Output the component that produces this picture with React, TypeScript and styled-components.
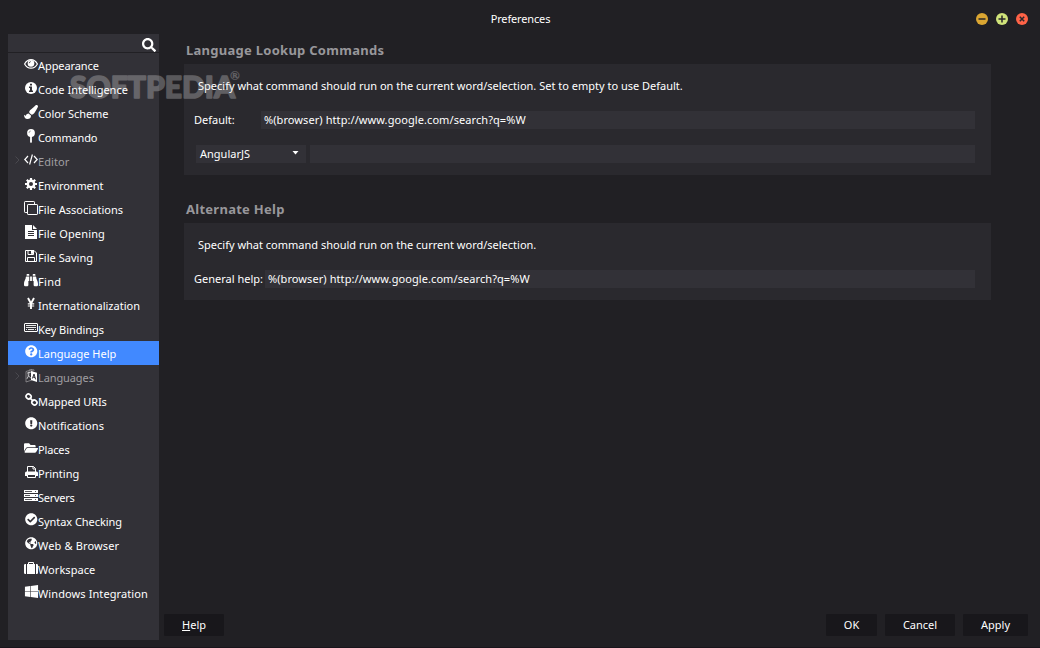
import React from "react";
import styled, { createGlobalStyle } from "styled-components";
import {
    FaBinoculars,
    FaCheckCircle,
    FaExclamationCircle,
    FaFolderOpen,
    FaGlobeAmericas,
    FaPaintBrush,
    FaQuestionCircle,
    FaSearch,
    FaWindows,
} from "react-icons/fa";

const GlobalStyle = createGlobalStyle`
    * {
        box-sizing: border-box;
    }

    body {
        margin: 0;
        background: #212024;
        overflow: hidden;
    }
`;

const Window = styled.div`
    position: relative;
    display: flex;
    flex-direction: column;
    width: 1040px;
    height: 648px;
    background: #212024;
    border-bottom: 1px solid #19151c;
    color: #fff;
    font-family: "Noto Sans", "Open Sans", sans-serif;
    font-size: 11px;
    line-height: 16px;
    white-space: nowrap;
`;

const TitleBar = styled.header`
    display: grid;
    grid-template-columns: 1fr auto 1fr;
    align-items: center;
    height: 34px;
    padding: 4px 12px 0 12px;
`;

const Title = styled.div`
    grid-column: 2;
    padding-left: 1px;
    letter-spacing: -0.15px;
`;

const Controls = styled.div`
    display: flex;
    justify-content: flex-end;
    gap: 8px;
`;

const Control = styled.svg`
    display: block;
    width: 12px;
    height: 12px;
`;

const Body = styled.div`
    display: flex;
    height: 606px;
    padding-left: 8px;
`;

const Sidebar = styled.nav`
    width: 151px;
    background: #323137;
`;

const SearchBar = styled.div`
    display: flex;
    justify-content: flex-end;
    height: 19px;
    padding: 4px 3px 0 0;
    border-bottom: 1px solid #212024;
    font-size: 14px;
`;

const NavItem = styled.div<{ $active?: boolean; $dim?: boolean }>`
    display: flex;
    align-items: center;
    height: 24px;
    background: ${({ $active }) => ($active ? "#4189ff" : "transparent")};
    color: ${({ $dim }) => ($dim ? "#a09fa2" : "#fff")};
`;

const Twisty = styled.span`
    display: flex;
    justify-content: flex-end;
    width: 16px;
    padding: 0 4px 2px 0;
`;

const NavIcon = styled.span`
    display: flex;
    align-items: center;
    justify-content: center;
    flex: none;
    width: 14px;
    height: 14px;
    margin-bottom: 3px;
    color: #fff;
    font-size: 12.5px;

    svg {
        flex: none;
        overflow: visible;
    }
`;

const Label = styled.span<{ $spacing?: number }>`
    padding-top: 2px;
    letter-spacing: ${({ $spacing = 0 }) => $spacing}px;
`;

const Main = styled.main`
    display: flex;
    flex-direction: column;
    width: 869px;
    padding-left: 5px;
`;

const Section = styled.section`
    width: 807px;
    margin: 0 0 18px 20px;
`;

const Heading = styled.h2`
    height: 30px;
    margin: 0;
    padding: 7px 0 0 2px;
    color: #98979b;
    font-size: 13px;
    font-weight: 700;
    line-height: 18px;
    letter-spacing: 0.27px;
`;

const Panel = styled.div<{ $height: number }>`
    height: ${({ $height }) => $height}px;
    padding: 14px 16px 0 10px;
    background: #2a292e;
`;

const Description = styled.p`
    margin: 0;
    padding-left: 4px;
`;

const Field = styled.div<{ $top: number; $label?: number }>`
    display: grid;
    grid-template-columns: ${({ $label = 0 }) => $label}px 1fr;
    align-items: center;
    height: 18px;
    margin-top: ${({ $top }) => $top}px;
`;

const Input = styled.div`
    height: 18px;
    padding: 1px 3px 0;
    background: #323137;
    letter-spacing: 0.08px;
`;

const Select = styled.div`
    display: flex;
    align-items: center;
    justify-content: space-between;
    width: 110px;
    height: 18px;
    margin-left: 2px;
    padding: 0 7px 0 4px;
    background: #323137;
`;

const Caret = styled.svg`
    width: 7px;
    height: 4px;
    margin-bottom: 3px;
`;

const Footer = styled.footer`
    display: flex;
    gap: 8px;
    margin-top: auto;
    padding-bottom: 4px;
`;

const Button = styled.div<{ $width: number }>`
    width: ${({ $width }) => $width}px;
    height: 22px;
    padding-top: 3px;
    border-radius: 1px;
    background: #18171b;
    text-align: center;

    &:first-child {
        margin-right: auto;
    }
`;

const Watermark = styled.svg`
    position: absolute;
    top: 66px;
    left: 64px;
    width: 184px;
    height: 40px;
    overflow: visible;
    pointer-events: none;
`;

const EyeIcon = () => (
    <svg width="14" height="10" viewBox="0 0 14 10" fill="none" stroke="currentColor">
        <path d="M.6 5C3.8-.8 10.2-.8 13.4 5C10.2 10.6 3.8 10.6.6 5Z" strokeWidth="1.2" />
        <circle cx="7" cy="4.4" r="3.3" fill="currentColor" stroke="none" />
        <path d="M5.2 4.2Q5.3 2.7 6.8 2.6" stroke="#323137" strokeWidth=".8" />
    </svg>
);

const InfoIcon = () => (
    <svg width="12" height="12" viewBox="0 0 12 12">
        <circle cx="6" cy="6" r="6" fill="currentColor" />
        <path d="M5 1.8H7V3.6H5zM4 4.6H7V8.4H8V10H4V8.4H5V6H4z" fill="#323137" />
    </svg>
);

const GearIcon = () => (
    <svg width="12" height="12" viewBox="0 0 12 12" fill="none" stroke="currentColor">
        <circle cx="6" cy="6" r="3.2" strokeWidth="2.4" />
        <path
            d="M6 0V2.5M6 9.5V12M0 6H2.5M9.5 6H12M1.8 1.8L3.5 3.5M8.5 8.5L10.2 10.2M1.8 10.2L3.5 8.5M8.5 3.5L10.2 1.8"
            strokeWidth="2.2"
        />
    </svg>
);

const YenIcon = () => (
    <svg width="8" height="11" viewBox="0 0 8 11" fill="none" stroke="currentColor">
        <path d="M1 0L4 5.5L7 0M4 5V11" strokeWidth="1.9" />
        <path d="M.8 5.9H7.2M.8 8H7.2" strokeWidth="1.1" />
    </svg>
);

const PinIcon = () => (
    <svg width="8" height="14" viewBox="0 0 8 14" fill="currentColor">
        <circle cx="4" cy="4" r="3.9" />
        <path d="M3.1 7h1.8v6.2L4 14l-.9-.8z" />
        <path d="M2 3.9Q2.1 2.2 3.8 2" fill="none" stroke="#777" strokeWidth=".7" />
    </svg>
);

const CodeIcon = () => (
    <svg width="14" height="11" viewBox="0 0 14 11" fill="none" stroke="currentColor" strokeWidth="1.2">
        <path d="M4 2L.8 5.5L4 9M10 2L13.2 5.5L10 9M8.4.5L5.6 10.5" />
    </svg>
);

const CopyIcon = () => (
    <svg width="14" height="14" viewBox="0 0 14 14" fill="none" stroke="currentColor">
        <path d="M3.5 11.5H1.2Q.5 11.5.5 10.8V1.2Q.5.5 1.2.5H9.8Q10.5.5 10.5 1.2V3" />
        <rect x="3.5" y="3.5" width="10" height="10" rx=".6" />
    </svg>
);

const FileIcon = () => (
    <svg width="12" height="14" viewBox="0 0 12 14">
        <path d="M0 0H7V5H12V14H0zM8 0L12 4H8z" fill="currentColor" />
        <path d="M3 6.5H9M3 8.5H9M3 10.5H9" stroke="#323137" />
    </svg>
);

const FloppyIcon = () => (
    <svg width="12" height="12" viewBox="0 0 12 12" fill="none" stroke="currentColor">
        <path d="M.5.5H9L11.5 3V11.5H.5zM3 .5V4.5H8.5V.5M2.5 11.5V7.5H9.5V11.5" />
        <path d="M6.5 1H7.5V3.5H6.5z" fill="currentColor" />
    </svg>
);

const KeyboardIcon = () => (
    <svg width="14" height="9" viewBox="0 0 14 9" fill="none" stroke="currentColor">
        <rect x=".5" y=".5" width="13" height="8" rx=".5" />
        <path d="M2 2.5H12M2 4.5H12M2 6.5H3M4 6.5H10M11 6.5H12" strokeWidth=".9" />
    </svg>
);

const LanguageIcon = () => (
    <svg width="12" height="14" viewBox="0 0 12 14" fill="none">
        <path d="M1 2.5L7 .5V11L1 13z" stroke="#a09fa2" strokeWidth=".7" />
        <path d="M2 4.2L6 3M4 2.5Q4.3 7 2 9.8M2.5 6L5.8 9" stroke="#d8d8da" strokeWidth=".9" />
        <path d="M6 2L12 3.8V13L6 11z" fill="currentColor" />
        <path d="M7.4 9.5L9 5L10.6 10.4M8 8L10 8.6" stroke="#323137" />
        <path d="M4 1L9 .8V2" stroke="#a09fa2" strokeWidth=".7" />
    </svg>
);

const LinkIcon = () => (
    <svg width="13" height="13" viewBox="0 0 13 13" fill="none" stroke="currentColor" strokeWidth="1.6">
        <rect x="1" y="1.2" width="5.2" height="4.6" rx="2.2" transform="rotate(45 3.6 3.5)" />
        <rect x="6.8" y="7.2" width="5.2" height="4.6" rx="2.2" transform="rotate(45 9.4 9.5)" />
        <path d="M4.6 4.7L8.4 8.3" />
    </svg>
);

const PrinterIcon = () => (
    <svg width="13" height="12" viewBox="0 0 13 12">
        <path d="M2.5 6V.5H8.5L10.5 2.5V6M8 .5V3H10.5" fill="none" stroke="currentColor" />
        <path d="M1.5 5.5H11.5Q13 5.5 13 7V10H0V7Q0 5.5 1.5 5.5z" fill="currentColor" />
        <path d="M2.5 8.5H10.5V11.5H2.5z" fill="#323137" stroke="currentColor" />
    </svg>
);

const ServerIcon = () => (
    <svg width="14" height="11" viewBox="0 0 14 11">
        <path d="M0 0H14V3H0zM0 4H14V7H0zM0 8H14V11H0z" fill="currentColor" />
        <path d="M1 1.5H8M1 5.5H6M1 9.5H8M11 1.5H12M11 5.5H12M11 9.5H12" stroke="#323137" strokeWidth=".8" />
    </svg>
);

const SuitcaseIcon = () => (
    <svg width="14" height="12" viewBox="0 0 14 12" fill="currentColor">
        <path d="M0 3.3Q0 2 1.3 2H2V12H1.3Q0 12 0 10.7zM14 3.3Q14 2 12.7 2H12V12H12.7Q14 12 14 10.7zM3 2H11V12H3z" />
        <path d="M4.5 2.5V.5H9.5V2.5" fill="none" stroke="currentColor" />
    </svg>
);

interface NavEntry {
    label: string;
    icon: React.ReactNode;
    spacing?: number;
    active?: boolean;
    parent?: boolean;
}

const entries: NavEntry[] = [
    { label: "Appearance", icon: <EyeIcon />, spacing: -0.08 },
    { label: "Code Intelligence", icon: <InfoIcon /> },
    { label: "Color Scheme", icon: <FaPaintBrush size={14} />, spacing: -0.08 },
    { label: "Commando", icon: <PinIcon />, spacing: -0.15 },
    { label: "Editor", icon: <CodeIcon />, parent: true, spacing: 0.1 },
    { label: "Environment", icon: <GearIcon />, spacing: -0.1 },
    { label: "File Associations", icon: <CopyIcon />, spacing: 0.04 },
    { label: "File Opening", icon: <FileIcon />, spacing: 0.15 },
    { label: "File Saving", icon: <FloppyIcon />, spacing: 0.04 },
    { label: "Find", icon: <FaBinoculars size={14} />, spacing: 0.3 },
    { label: "Internationalization", icon: <YenIcon /> },
    { label: "Key Bindings", icon: <KeyboardIcon />, spacing: -0.04 },
    { label: "Language Help", icon: <FaQuestionCircle />, active: true },
    { label: "Languages", icon: <LanguageIcon />, parent: true, spacing: -0.1 },
    { label: "Mapped URIs", icon: <LinkIcon />, spacing: -0.05 },
    { label: "Notifications", icon: <FaExclamationCircle />, spacing: 0.04 },
    { label: "Places", icon: <FaFolderOpen size={14} />, spacing: -0.15 },
    { label: "Printing", icon: <PrinterIcon /> },
    { label: "Servers", icon: <ServerIcon />, spacing: -0.25 },
    { label: "Syntax Checking", icon: <FaCheckCircle />, spacing: -0.05 },
    { label: "Web & Browser", icon: <FaGlobeAmericas />, spacing: 0.15 },
    { label: "Workspace", icon: <SuitcaseIcon />, spacing: 0.06 },
    { label: "Windows Integration", icon: <FaWindows size={15} />, spacing: 0.1 },
];

const controls = [
    { color: "#dba632", path: "M2.5 6H9.5" },
    { color: "#d0e37a", path: "M2.5 6H9.5M6 2.5V9.5" },
    { color: "#ff6347", path: "M3.8 3.8L8.2 8.2M8.2 3.8L3.8 8.2" },
];

export default function App() {
    return (
        <Window>
            <GlobalStyle />
            <TitleBar>
                <Title>Preferences</Title>
                <Controls>
                    {controls.map((control) => (
                        <Control key={control.color} viewBox="0 0 12 12">
                            <circle cx="6" cy="6" r="6" fill={control.color} />
                            <path d={control.path} stroke="#29272b" strokeWidth="1.5" />
                        </Control>
                    ))}
                </Controls>
            </TitleBar>
            <Body>
                <Sidebar>
                    <SearchBar>
                        <FaSearch />
                    </SearchBar>
                    {entries.map((entry) => (
                        <NavItem key={entry.label} $active={entry.active} $dim={entry.parent}>
                            <Twisty>
                                {entry.parent && (
                                    <svg width="5" height="8" viewBox="0 0 5 8" fill="none" stroke="#4a494f">
                                        <path d="M.5.5L4 4L.5 7.5" />
                                    </svg>
                                )}
                            </Twisty>
                            <NavIcon>{entry.icon}</NavIcon>
                            <Label $spacing={entry.spacing}>{entry.label}</Label>
                        </NavItem>
                    ))}
                </Sidebar>
                <Main>
                    <Section>
                        <Heading>Language Lookup Commands</Heading>
                        <Panel $height={111}>
                            <Description>
                                Specify what command should run on the current word/selection. Set to empty to use
                                Default.
                            </Description>
                            <Field $top={17} $label={67}>
                                <span>Default:</span>
                                <Input>%(browser) http://www.google.com/search?q=%W</Input>
                            </Field>
                            <Field $top={16} $label={116}>
                                <Select>
                                    AngularJS
                                    <Caret viewBox="0 0 7 4">
                                        <path d="M.5 0H6.5L3.5 3.5z" fill="#fff" />
                                    </Caret>
                                </Select>
                                <Input />
                            </Field>
                        </Panel>
                    </Section>
                    <Section>
                        <Heading>Alternate Help</Heading>
                        <Panel $height={77}>
                            <Description>Specify what command should run on the current word/selection.</Description>
                            <Field $top={17} $label={71}>
                                <span>General help:</span>
                                <Input>%(browser) http://www.google.com/search?q=%W</Input>
                            </Field>
                        </Panel>
                    </Section>
                    <Footer>
                        <Button $width={60}>
                            <u>H</u>elp
                        </Button>
                        <Button $width={51}>OK</Button>
                        <Button $width={70}>Cancel</Button>
                        <Button $width={65}>Apply</Button>
                    </Footer>
                </Main>
            </Body>
            <Watermark>
                <g opacity=".25" fill="#fff" fontFamily="Lato, sans-serif" fontWeight="900">
                    <text
                        x="6"
                        y="32"
                        fontSize="31"
                        textLength="165"
                        lengthAdjust="spacingAndGlyphs"
                        stroke="#fff"
                        strokeWidth="1.6"
                        strokeLinejoin="round"
                    >
                        SOFTPEDIA
                    </text>
                    <text x="166" y="14" fontSize="12">
                        ®
                    </text>
                </g>
            </Watermark>
        </Window>
    );
}
